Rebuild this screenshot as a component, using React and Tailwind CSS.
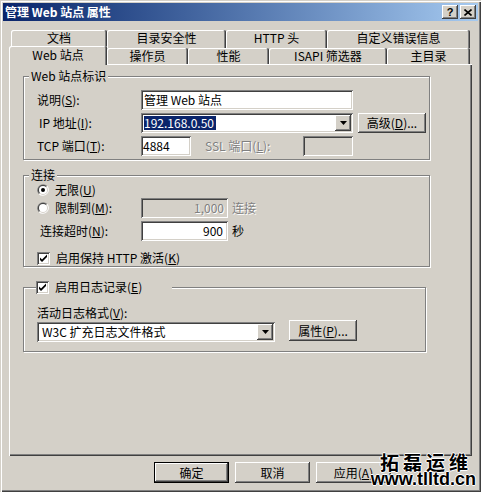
const raised =
  'shadow-[inset_-1px_-1px_0_#404040,inset_1px_1px_0_#fff,inset_-2px_-2px_0_#808080,inset_2px_2px_0_#d4d0c8]';
const sunken =
  'shadow-[inset_1px_1px_0_#808080,inset_-1px_-1px_0_#fff,inset_2px_2px_0_#404040,inset_-2px_-2px_0_#d4d0c8]';
const etched = 'border border-[#808080] shadow-[inset_1px_1px_0_#fff,1px_1px_0_#fff]';
const tab = 'flex items-center justify-center shadow-[inset_-1px_0_0_#404040,inset_1px_1px_0_#fff,inset_-2px_0_0_#808080] rounded-t-[2px]';
const grey = 'text-[#808080] [text-shadow:1px_1px_0_#fff]';

function U({ children }) {
  return <span className="underline underline-offset-[1px]">{children}</span>;
}

function Arrow() {
  return (
    <svg width="7" height="4" viewBox="0 0 7 4">
      <path d="M0 0h7L3.5 4z" fill="#000" />
    </svg>
  );
}

function Combo({ width, children }) {
  return (
    <div className={`flex h-[20px] items-center bg-white p-[2px] ${sunken} ${width}`}>
      <div className="flex h-[16px] flex-1 items-center pl-[1px] whitespace-nowrap">{children}</div>
      <div className={`flex h-[16px] w-[16px] items-center justify-center bg-[#d4d0c8] ${raised}`}>
        <Arrow />
      </div>
    </div>
  );
}

function Radio({ checked }) {
  return (
    <svg width="12" height="12" viewBox="0 0 12 12">
      <path d="M1.76 10.24A6 6 0 0 1 10.24 1.76Z" fill="#808080" />
      <path d="M1.76 10.24A6 6 0 0 0 10.24 1.76Z" fill="#fff" />
      <path d="M2.46 9.54A5 5 0 0 1 9.54 2.46Z" fill="#404040" />
      <path d="M2.46 9.54A5 5 0 0 0 9.54 2.46Z" fill="#d4d0c8" />
      <circle cx="6" cy="6" r="4" fill="#fff" />
      {checked && <circle cx="6" cy="6" r="2" fill="#000" />}
    </svg>
  );
}

function Check() {
  return (
    <div className={`relative h-[13px] w-[13px] shrink-0 bg-white ${sunken}`}>
      <svg width="13" height="13" viewBox="0 0 13 13" className="absolute inset-0">
        <path d="M3 5.5L5 7.5L10 2.5V5L5 10L3 8Z" fill="#000" />
      </svg>
    </div>
  );
}

function Group({ legend, className, children }) {
  return (
    <div className={`relative box-border ${etched} ${className}`}>
      <div className="absolute -top-[8px] left-[5px] flex h-[14px] items-center bg-[#d4d0c8] px-[2px]">
        {legend}
      </div>
      {children}
    </div>
  );
}

function TitleBar() {
  return (
    <div className="flex h-[18px] items-center justify-between bg-gradient-to-r from-[#0a246a] to-[#a6caf0] pr-[2px] pl-[2px]">
      <span className="font-bold text-white">管理 Web 站点 属性</span>
      <div className="flex gap-[2px]">
        <div className={`flex h-[14px] w-[16px] items-center justify-center bg-[#d4d0c8] ${raised}`}>
          <span className="text-[11px] leading-none font-bold [font-family:'Liberation_Sans',sans-serif]">?</span>
        </div>
        <div className={`flex h-[14px] w-[16px] items-center justify-center bg-[#d4d0c8] ${raised}`}>
          <svg width="8" height="7" viewBox="0 0 8 7">
            <path d="M0.5 0.5L7.5 6.5M7.5 0.5L0.5 6.5" stroke="#000" strokeWidth="1.6" />
          </svg>
        </div>
      </div>
    </div>
  );
}

function Tabs() {
  return (
    <div className="mt-[9px] pl-[8px]">
      <div className="flex h-[18px]">
        <div className={`${tab} w-[96px] pb-[2px]`}>文档</div>
        <div className={`${tab} w-[119px] pb-[2px]`}>目录安全性</div>
        <div className={`${tab} w-[101px] pb-[2px]`}>HTTP 头</div>
        <div className={`${tab} w-[143px] pb-[2px]`}>自定义错误信息</div>
      </div>
      <div className="flex h-[16px]">
        <div className={`${tab} relative z-10 -mt-[2px] -ml-[2px] h-[19px] w-[98px] bg-[#d4d0c8] pt-[1px] pb-[3px]`}>Web 站点</div>
        <div className={`${tab} w-[81px]`}>操作员</div>
        <div className={`${tab} w-[81px]`}>性能</div>
        <div className={`${tab} w-[118px]`}>ISAPI 筛选器</div>
        <div className={`${tab} w-[83px]`}>主目录</div>
      </div>
    </div>
  );
}

function SiteGroup() {
  return (
    <Group legend="Web 站点标识" className="mt-[12px] h-[84px] w-[407px] pt-[13px] pl-[13px]">
      <div className="flex flex-col gap-[3px]">
        <div className="flex h-[20px] items-center">
          <span className="w-[104px]">说明(<U>S</U>):</span>
          <div className={`flex h-[20px] w-[212px] items-center bg-white pl-[3px] ${sunken}`}>管理 Web 站点</div>
        </div>
        <div className="flex h-[20px] items-center">
          <span className="w-[104px] pl-[2px]">IP 地址(<U>I</U>):</span>
          <Combo width="w-[212px]">
            <span className="bg-[#0a246a] pr-[2px] text-white">192.168.0.50</span>
          </Combo>
          <div className={`ml-[5px] flex h-[20px] w-[68px] items-center justify-center ${raised}`}>
            高级(<U>D</U>)...
          </div>
        </div>
        <div className="flex h-[20px] items-center">
          <span className="w-[104px]">TCP 端口(<U>T</U>):</span>
          <div className={`flex h-[20px] w-[50px] items-center bg-white pl-[2px] ${sunken}`}>4884</div>
          <span className={`ml-[14px] w-[98px] ${grey}`}>SSL 端口(<U>L</U>):</span>
          <div className={`h-[20px] w-[50px] ${sunken}`} />
        </div>
      </div>
    </Group>
  );
}

function ConnGroup() {
  return (
    <Group legend="连接" className="mt-[15px] h-[92px] w-[407px] pt-[6px] pl-[13px]">
      <div className="flex h-[16px] items-center gap-[6px]">
        <Radio checked />
        <span>无限(<U>U</U>)</span>
      </div>
      <div className="flex h-[20px] items-center">
        <div className="flex w-[104px] items-center gap-[6px]">
          <Radio />
          <span>限制到(<U>M</U>):</span>
        </div>
        <div className={`flex h-[20px] w-[87px] items-center justify-end pr-[4px] ${sunken} ${grey}`}>1,000</div>
        <span className={`ml-[4px] ${grey}`}>连接</span>
      </div>
      <div className="mt-[3px] flex h-[20px] items-center">
        <span className="w-[104px] pl-[3px]">连接超时(<U>N</U>):</span>
        <div className={`flex h-[20px] w-[87px] items-center justify-end bg-white pr-[5px] ${sunken}`}>900</div>
        <span className="ml-[4px]">秒</span>
      </div>
      <div className="mt-[10px] flex h-[14px] items-center gap-[6px]">
        <Check />
        <span>启用保持 HTTP 激活(<U>K</U>)</span>
      </div>
    </Group>
  );
}

function LogGroup() {
  return (
    <div className={`relative mt-[20px] box-border h-[65px] w-[403px] pt-[18px] pl-[13px] ${etched}`}>
      <div className="absolute -top-[8px] left-[12px] flex h-[14px] w-[136px] items-center gap-[6px] bg-[#d4d0c8]">
        <Check />
        <span>启用日志记录(<U>E</U>)</span>
      </div>
      <div className="flex h-[14px] items-center">活动日志格式(<U>V</U>):</div>
      <div className="flex items-start">
        <div className="mt-[2px]">
          <Combo width="w-[238px]">
            <span className="pl-[2px]">W3C 扩充日志文件格式</span>
          </Combo>
        </div>
        <div className={`ml-[14px] flex h-[21px] w-[68px] items-center justify-center ${raised}`}>
          属性(<U>P</U>)...
        </div>
      </div>
    </div>
  );
}

function Buttons() {
  return (
    <div className="mt-[6px] flex gap-[6px] pl-[151px]">
      <div className="h-[21px] w-[75px] border border-black">
        <div className={`flex h-full items-center justify-center ${raised}`}>确定</div>
      </div>
      <div className={`flex h-[21px] w-[75px] items-center justify-center ${raised}`}>取消</div>
      <div className={`flex h-[21px] w-[75px] items-center justify-center ${raised}`}>
        应用(<U>A</U>)
      </div>
    </div>
  );
}

function Watermark() {
  return (
    <div className="absolute right-[5px] bottom-[5px] flex flex-col items-end text-black [text-shadow:1px_0_0_#fff,-1px_0_0_#fff,0_1px_0_#fff,0_-1px_0_#fff]">
      <span className="mr-[4px] text-[19px] leading-[18px] font-bold tracking-[4px]">拓磊运维</span>
      <span className="text-[18px] leading-[16px] font-bold [font-family:'Liberation_Sans',sans-serif]">www.tlltd.cn</span>
    </div>
  );
}

export default function App() {
  return (
    <div className="relative flex h-[492px] w-[481px] flex-col bg-[#d4d0c8] p-[3px] text-[12px] leading-[14px] text-black [font-family:'Noto_Sans_CJK_SC','Liberation_Sans',sans-serif] shadow-[inset_1px_1px_0_#d4d0c8,inset_2px_2px_0_#fff,inset_-1px_-1px_0_#404040,inset_-2px_-2px_0_#808080]">
      <TitleBar />
      <Tabs />
      <div className="ml-[6px] flex h-[392px] w-[463px] flex-col pl-[14px] shadow-[inset_1px_1px_0_#fff,inset_-1px_-1px_0_#404040,inset_-2px_-2px_0_#808080]">
        <SiteGroup />
        <ConnGroup />
        <LogGroup />
      </div>
      <Buttons />
      <Watermark />
    </div>
  );
}
